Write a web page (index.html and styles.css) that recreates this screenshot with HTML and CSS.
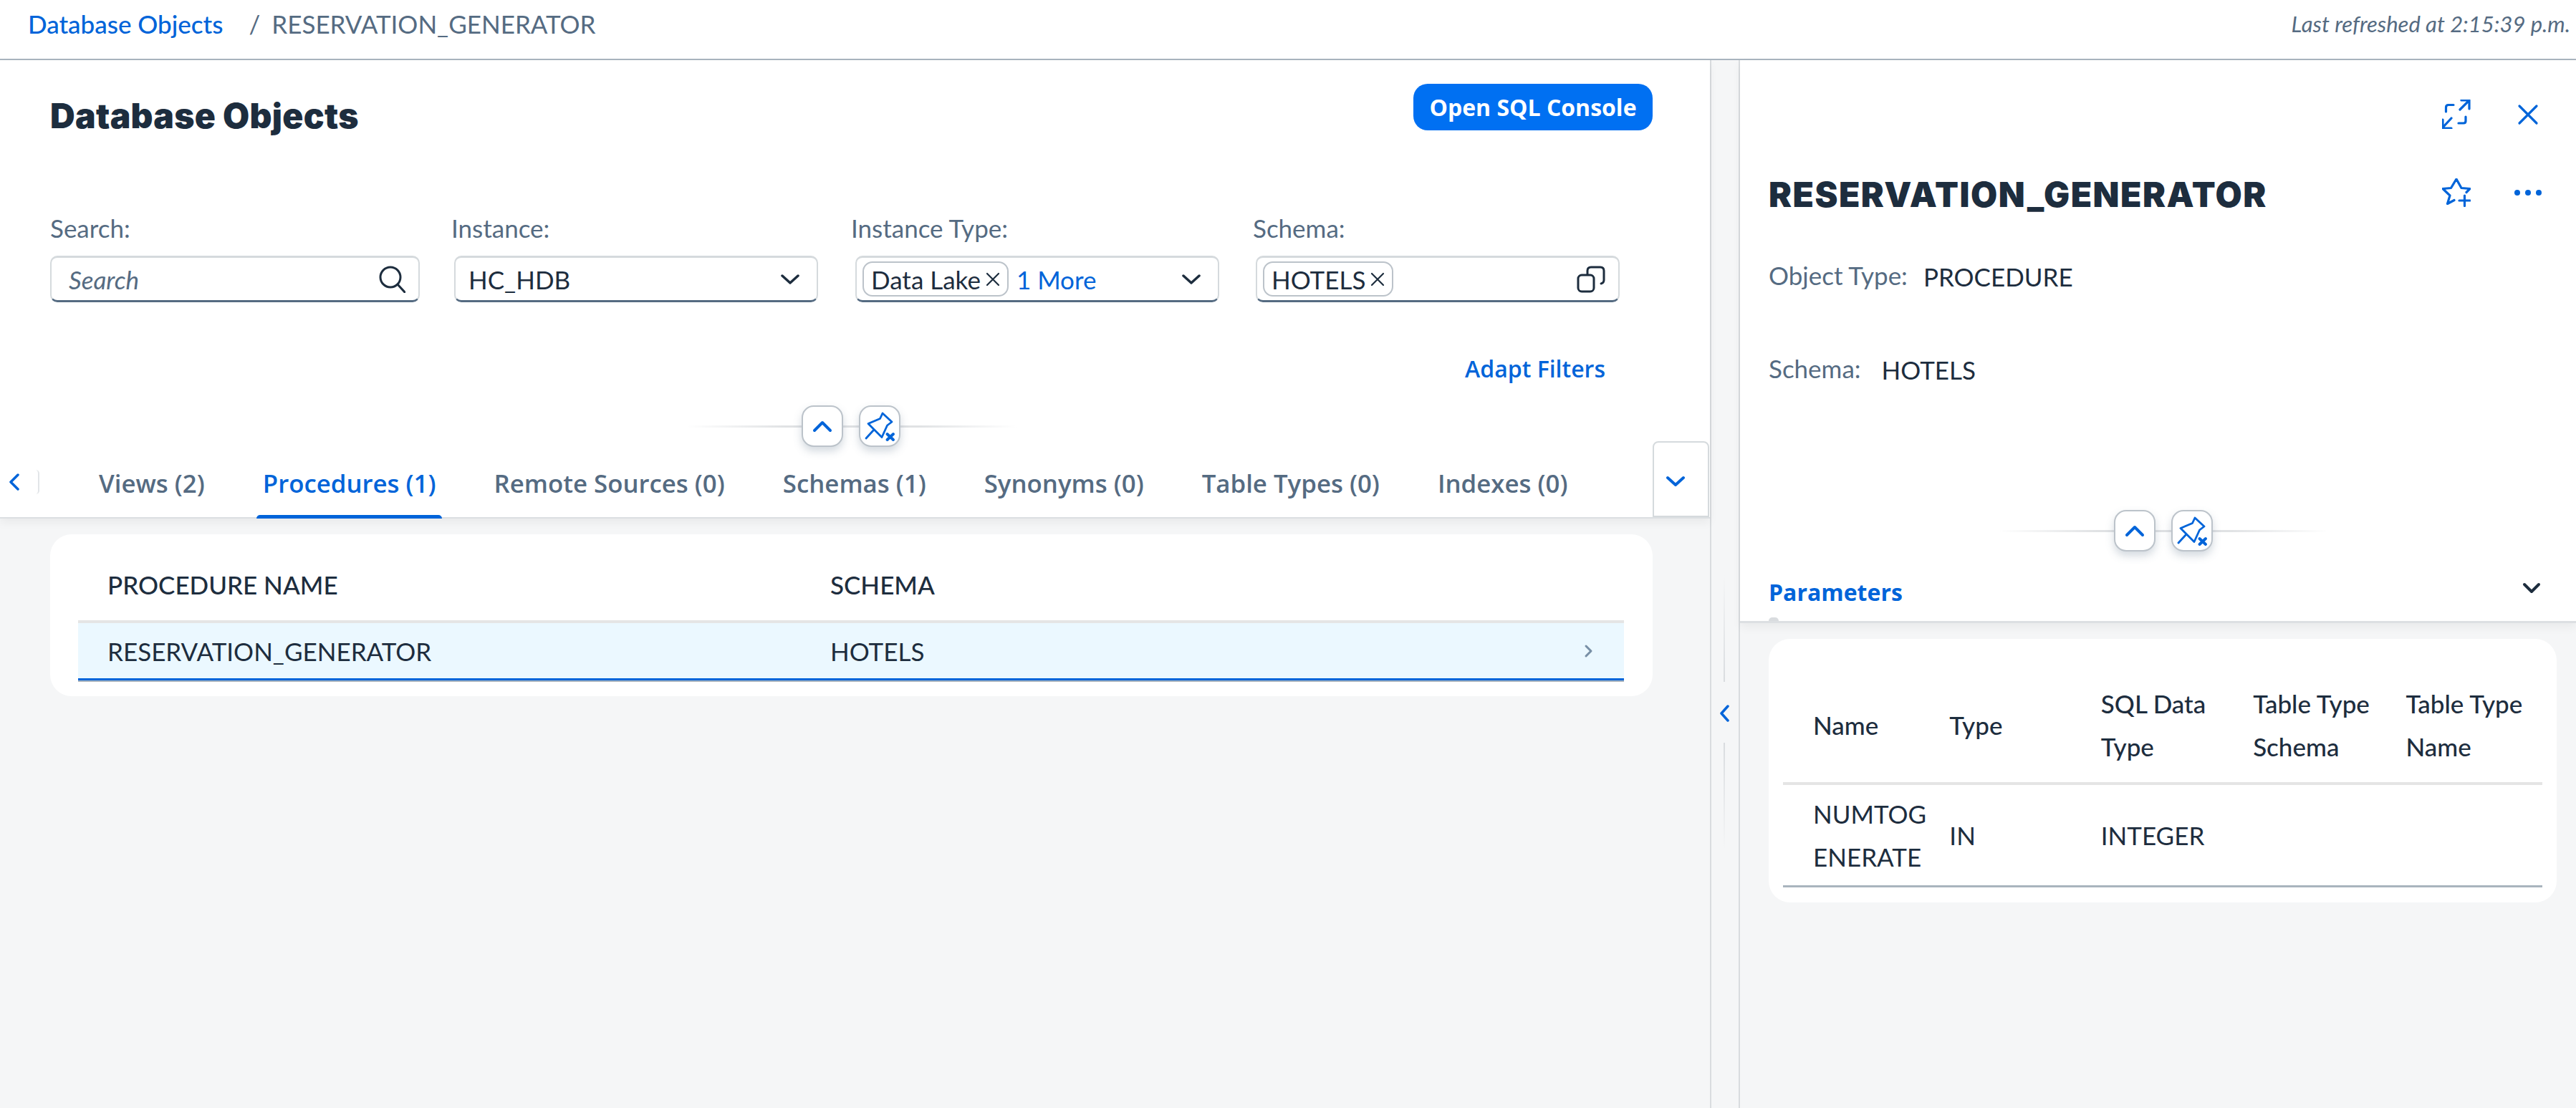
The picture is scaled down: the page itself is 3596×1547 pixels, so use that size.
FILE: index.html
```html
<!DOCTYPE html>
<html lang="en">
<head>
    <meta charset="UTF-8">
    <title>Database Objects</title>
    <link rel="stylesheet" href="styles.css">
</head>
<body>
    <header class="topbar">
        <div class="breadcrumb">
            <a class="crumb-link">Database Objects</a>
            <span class="crumb-sep">/</span>
            <span class="crumb-current">RESERVATION_GENERATOR</span>
        </div>
        <div class="refreshed">Last refreshed at 2:15:39 p.m.</div>
    </header>

    <div class="main">
        <section class="list-pane">
            <div class="list-head">
                <div class="title-row">
                    <h1 class="page-title">Database Objects</h1>
                    <button class="primary-btn">Open SQL Console</button>
                </div>

                <div class="filters">
                    <div class="filter">
                        <label class="filter-label">Search:</label>
                        <div class="field field-search">
                            <span class="placeholder">Search</span>
                            <svg class="icon-search" width="38" height="38" viewBox="0 0 38 38"><circle cx="17" cy="16" r="14"/><path d="M27 26l10 11"/></svg>
                        </div>
                    </div>
                    <div class="filter">
                        <label class="filter-label">Instance:</label>
                        <div class="field">
                            <span class="field-value">HC_HDB</span>
                            <svg class="icon-arrow" width="26" height="14" viewBox="0 0 26 14"><path d="M2 2l11 10L24 2"/></svg>
                        </div>
                    </div>
                    <div class="filter">
                        <label class="filter-label">Instance Type:</label>
                        <div class="field field-tokens">
                            <span class="token">Data Lake <svg class="token-x" width="20" height="20" viewBox="0 0 20 20"><path d="M2 2l16 16M18 2L2 18"/></svg></span>
                            <span class="more-link">1 More</span>
                            <svg class="icon-arrow" width="26" height="14" viewBox="0 0 26 14"><path d="M2 2l11 10L24 2"/></svg>
                        </div>
                    </div>
                    <div class="filter">
                        <label class="filter-label">Schema:</label>
                        <div class="field field-tokens">
                            <span class="token">HOTELS <svg class="token-x" width="20" height="20" viewBox="0 0 20 20"><path d="M2 2l16 16M18 2L2 18"/></svg></span>
                            <svg class="icon-help" width="40" height="38" viewBox="0 0 40 38"><rect x="2" y="13" width="22" height="23" rx="5"/><path d="M15 12V7q0-5 5-5h13q5 0 5 5v13q0 4-4 5"/></svg>
                        </div>
                    </div>
                </div>

                <div class="adapt-row"><a class="adapt-link">Adapt Filters</a></div>

                <div class="collapse-row">
                    <button class="round-btn"><svg width="58" height="58" viewBox="0 0 58 58"><path d="M18 35l11-11 11 11"/></svg></button>
                    <button class="round-btn pin-btn"><svg width="58" height="58" viewBox="0 0 58 58"><path d="M33 11l13 12-6.500 5L32 44.500 13 25.500l16.500-7zM20.500 34.500L10 46"/><path class="pin-x" d="M39.500 40l8.500 8M48 40l-8.500 8"/></svg></button>
                </div>

                <nav class="tabs">
                    <button class="tab-scroll"><svg width="16" height="24" viewBox="0 0 16 24"><path d="M13 2L3 12l10 10"/></svg></button>
                    <span class="tab-cut"></span>
                    <div class="tab-list">
                        <a class="tab">Views (2)</a>
                        <a class="tab tab-active">Procedures (1)</a>
                        <a class="tab">Remote Sources (0)</a>
                        <a class="tab">Schemas (1)</a>
                        <a class="tab">Synonyms (0)</a>
                        <a class="tab">Table Types (0)</a>
                        <a class="tab">Indexes (0)</a>
                    </div>
                    <button class="tab-more"><svg width="26" height="16" viewBox="0 0 26 16"><path d="M2 3l11 10L24 3"/></svg></button>
                </nav>
            </div>

            <div class="list-body">
                <div class="card list-card">
                    <table class="grid">
                        <colgroup><col class="col-name"><col class="col-schema"><col class="col-nav"></colgroup>
                        <thead>
                            <tr><th>PROCEDURE NAME</th><th>SCHEMA</th><th></th></tr>
                        </thead>
                        <tbody>
                            <tr class="row-selected">
                                <td>RESERVATION_GENERATOR</td>
                                <td>HOTELS</td>
                                <td class="nav-cell"><svg width="14" height="20" viewBox="0 0 14 20"><path d="M3 3l7 7-7 7"/></svg></td>
                            </tr>
                        </tbody>
                    </table>
                </div>
            </div>
        </section>

        <div class="splitter">
            <span class="split-line"></span>
            <svg class="split-arrow" width="14" height="24" viewBox="0 0 14 24"><path d="M12 2L3 12l9 10"/></svg>
            <span class="split-line split-line-low"></span>
        </div>

        <aside class="detail-pane">
            <div class="detail-head">
                <div class="detail-tools">
                    <svg class="tool" width="40" height="41" viewBox="0 0 40 41"><path d="M25 14L38 1M27 1h11v12M13 26L1 39M1 28v12h12M16 7.500h-7q-3.500 0-3.500 3.500v6M23 33h7q3 0 3-3v-6"/></svg>
                    <svg class="tool" width="40" height="41" viewBox="0 0 40 41"><path d="M8 9l24 24M32 9L8 33"/></svg>
                </div>
                <div class="detail-title-row">
                    <h2 class="detail-title">RESERVATION_GENERATOR</h2>
                    <div class="detail-actions">
                        <svg class="tool" width="40" height="40" viewBox="0 0 40 40"><path d="M34 19.500l5-5-12-1L20 1l-7.500 12.500L1 14.500 11 24 7.500 35.500l9.500-5M24 31h15M31.500 24v14.500"/></svg>
                        <svg class="tool-dots" width="40" height="40" viewBox="0 0 40 40"><circle cx="5" cy="20" r="4"/><circle cx="20" cy="20" r="4"/><circle cx="35" cy="20" r="4"/></svg>
                    </div>
                </div>
                <div class="attr"><span class="attr-label">Object Type:</span><span class="attr-value">PROCEDURE</span></div>
                <div class="attr"><span class="attr-label">Schema:</span><span class="attr-value">HOTELS</span></div>

                <div class="collapse-row collapse-row-detail">
                    <button class="round-btn"><svg width="58" height="58" viewBox="0 0 58 58"><path d="M18 35l11-11 11 11"/></svg></button>
                    <button class="round-btn pin-btn"><svg width="58" height="58" viewBox="0 0 58 58"><path d="M33 11l13 12-6.500 5L32 44.500 13 25.500l16.500-7zM20.500 34.500L10 46"/><path class="pin-x" d="M39.500 40l8.500 8M48 40l-8.500 8"/></svg></button>
                </div>

                <div class="section-tab">
                    <span class="section-name">Parameters</span>
                    <svg class="section-arrow" width="26" height="16" viewBox="0 0 26 16"><path d="M3 3l10 10L23 3"/></svg>
                </div>
            </div>

            <div class="detail-body">
                <div class="card param-card">
                    <table class="grid grid-params">
                        <colgroup><col class="p1"><col class="p2"><col class="p3"><col class="p4"><col class="p5"></colgroup>
                        <thead>
                            <tr><th>Name</th><th>Type</th><th>SQL Data Type</th><th>Table Type Schema</th><th>Table Type Name</th></tr>
                        </thead>
                        <tbody>
                            <tr><td class="wrap-cell">NUMTOG<wbr>ENERATE</td><td>IN</td><td>INTEGER</td><td></td><td></td></tr>
                        </tbody>
                    </table>
                </div>
            </div>
        </aside>
    </div>
</body>
</html>
```
FILE: styles.css
```css
* {
    box-sizing: border-box;
}
html, body {
    height: 100%;
}
body {
    margin: 0;
    overflow: hidden;
    display: flex;
    flex-direction: column;
    background-color: #f5f6f7;
    color: #1d2d3e;
    font-family: Lato, "Open Sans", sans-serif;
    font-size: 35px;
}
button {
    font-family: inherit;
    padding: 0;
    cursor: pointer;
}
svg {
    display: block;
    fill: none;
    stroke-linecap: round;
    stroke-linejoin: round;
}

/* top bar */
.topbar {
    height: 84px;
    flex: none;
    display: flex;
    align-items: center;
    justify-content: space-between;
    padding: 0 8px 16px 39px;
    background-color: white;
    border-bottom: 2px solid #a9b4be;
}
.breadcrumb {
    display: flex;
    align-items: center;
}
.crumb-link {
    color: #0064d9;
    font-weight: 500;
}
.crumb-sep {
    margin: 0 16px 0 36px;
    color: #556b82;
}
.crumb-current {
    color: #556b82;
}
.refreshed {
    color: #556b82;
    font-size: 31px;
    font-style: italic;
}

.main {
    flex: 1;
    display: flex;
    min-height: 0;
}

/* left pane */
.list-pane {
    width: 2389px;
    flex: none;
    border-right: 2px solid #d9dcdf;
    display: flex;
    flex-direction: column;
}
.list-head {
    background-color: white;
    height: 640px;
    flex: none;
    border-bottom: 2px solid #dcdfe2;
    box-shadow: 0 6px 12px rgba(0, 0, 0, 0.05);
    display: flex;
    flex-direction: column;
    position: relative;
}
.title-row {
    height: 98px;
    margin-top: 33px;
    padding: 0 80px 0 70px;
    display: flex;
    justify-content: space-between;
    align-items: flex-start;
}
.page-title, .detail-title {
    margin: 0;
    font-family: Inter, "Open Sans", sans-serif;
    font-size: 48px;
    font-weight: 900;
    line-height: 58px;
}
.page-title {
    padding-top: 16px;
    letter-spacing: 0.3px;
}
.primary-btn {
    width: 334px;
    height: 65px;
    background-color: #0070f2;
    color: white;
    border: none;
    border-radius: 20px;
    font-family: "Open Sans", sans-serif;
    font-size: 32px;
    font-weight: 700;
}
.filters {
    display: grid;
    grid-template-columns: 560px 558px 561px 560px;
    padding-left: 70px;
    margin-top: 79px;
}
.filter-label {
    display: block;
    height: 48px;
    line-height: 48px;
    color: #556b82;
}
.field {
    height: 65px;
    width: 508px;
    margin-top: 15px;
    margin-left: 4px;
    padding: 0 12px 0 18px;
    display: flex;
    align-items: center;
    justify-content: space-between;
    background-color: white;
    border: 2px solid #d5dadd;
    border-top-width: 3px;
    border-bottom: 3px solid #556b82;
    border-radius: 10px;
}
.filter:nth-child(3) .field {
    margin-left: 6px;
}
.field-search {
    width: 516px;
    margin-left: 0;
    padding-left: 24px;
    padding-right: 18px;
}
.placeholder {
    font-style: italic;
    color: #556b82;
}
.icon-search, .icon-arrow, .icon-help {
    stroke: #1d2d3e;
}
.icon-search {
    stroke-width: 3;
}
.icon-arrow {
    stroke-width: 3.5;
    margin-right: 12px;
}
.icon-help {
    stroke-width: 3;
    margin-right: 6px;
}
.field-tokens {
    padding-left: 8px;
    justify-content: flex-start;
}
.field-tokens svg.icon-arrow, .field-tokens svg.icon-help {
    margin-left: auto;
}
.token {
    height: 49px;
    display: flex;
    align-items: center;
    gap: 7px;
    padding: 0 10px 0 10px;
    border: 2px solid #bcc3ca;
    border-radius: 14px;
    white-space: nowrap;
}
.token-x {
    stroke: #1d2d3e;
    stroke-width: 2.2;
}
.more-link {
    margin-left: 11px;
    color: #0064d9;
}
.adapt-row {
    height: 40px;
    margin-top: 72px;
    padding-right: 146px;
    display: flex;
    align-items: center;
    justify-content: flex-end;
}
.adapt-link {
    color: #0064d9;
    font-family: "Open Sans", sans-serif;
    font-size: 32px;
    font-weight: 600;
}
.collapse-row {
    height: 58px;
    margin-top: 32px;
    padding-right: 11px;
    display: flex;
    justify-content: center;
    gap: 22px;
    background: linear-gradient(to right, transparent, #e0e2e4 30%, #e0e2e4 70%, transparent) no-repeat calc(50% - 5px) center / 460px 3px;
}
.round-btn {
    width: 58px;
    height: 58px;
    background-color: white;
    border: 2px solid #bcc3ca;
    border-radius: 17px;
    box-shadow: 0 6px 12px rgba(85, 107, 130, 0.25);
}
.round-btn svg {
    margin: -2px;
    stroke: #0064d9;
    stroke-width: 4;
}
.pin-btn svg {
    stroke-width: 2.8;
}
.pin-btn .pin-x {
    stroke-width: 4;
}

/* tabs */
.tabs {
    height: 98px;
    flex: none;
    display: flex;
    align-items: flex-end;
    position: relative;
}
.tab-scroll {
    width: 50px;
    height: 98px;
    padding-left: 12px;
    border: none;
    background: none;
    align-self: center;
}
.tab-scroll svg {
    stroke: #0064d9;
    stroke-width: 3.5;
}
.tab-cut {
    width: 5px;
    height: 34px;
    align-self: center;
    border-right: 2px solid #e2e5e8;
    border-radius: 0 14px 14px 0;
}
.tab-list {
    flex: 1;
    display: flex;
    gap: 63px;
    padding-left: 74px;
}
.tab {
    height: 98px;
    padding: 27px 9px 0;
    color: #556b82;
    font-family: "Open Sans", sans-serif;
    font-size: 34.800px;
    font-weight: 600;
    white-space: nowrap;
    position: relative;
}
.tab-active {
    color: #0064d9;
}
.tab-active::after {
    content: "";
    position: absolute;
    left: 0;
    right: 0;
    bottom: -2px;
    height: 5px;
    background-color: #0064d9;
    border-radius: 5px 5px 0 0;
}
.tab-more {
    width: 79px;
    height: 106px;
    flex: none;
    margin-right: 1px;
    background-color: white;
    border: 2px solid #d5dadd;
    border-radius: 8px 8px 0 0;
    padding: 6px 0 0 17px;
    align-self: flex-end;
}
.tab-more svg {
    stroke: #0064d9;
    stroke-width: 4;
}

/* cards and tables */
.list-body {
    padding: 22px 80px 0 70px;
}
.card {
    background-color: white;
    border-radius: 30px;
}
.list-card {
    height: 226px;
    padding: 0 40px 0 39px;
}
.grid {
    width: 100%;
    border-collapse: collapse;
    table-layout: fixed;
}
.grid th {
    text-align: left;
    font-weight: 500;
    padding: 0 0 0 41px;
}
.grid td {
    padding: 0 0 0 41px;
}
.list-card .grid th {
    height: 122px;
    padding-top: 20px;
    border-bottom: 4px solid #e5e5e5;
}
.list-card .grid td {
    height: 84px;
    padding-bottom: 4px;
}
.col-name {
    width: 1009px;
}
.col-nav {
    width: 100px;
}
.row-selected td {
    background: linear-gradient(to top, #a9b4be 2px, #0064d9 2px, #0064d9 5px, #ebf8ff 5px);
}
.nav-cell svg {
    margin-left: 3px;
    stroke: #788fa6;
    stroke-width: 3;
}

/* splitter */
.splitter {
    width: 40px;
    flex: none;
    border-right: 2px solid #d9dcdf;
    display: flex;
    flex-direction: column;
    align-items: center;
    padding-top: 718px;
    padding-right: 2px;
}
.split-line {
    width: 2px;
    height: 150px;
    flex: none;
    background: linear-gradient(to top, #d9dcdf, transparent);
}
.split-line-low {
    margin-top: 29px;
    background: linear-gradient(to bottom, #d9dcdf, transparent);
}
.split-arrow {
    flex: none;
    margin-top: 32px;
    stroke: #0064d9;
    stroke-width: 3.5;
}

/* right pane */
.detail-pane {
    flex: 1;
    min-width: 0;
    display: flex;
    flex-direction: column;
}
.detail-head {
    height: 786px;
    flex: none;
    background-color: white;
    border-bottom: 3px solid #dcdfe2;
    box-shadow: 0 6px 12px rgba(0, 0, 0, 0.05);
    display: flex;
    flex-direction: column;
    padding: 0 27px 0 40px;
}
.detail-tools {
    display: flex;
    justify-content: flex-end;
    gap: 60px;
    margin-top: 55px;
    margin-right: 20px;
}
.tool {
    stroke: #0064d9;
    stroke-width: 3.2;
}
.tool-dots {
    fill: #0064d9;
}
.detail-title-row {
    height: 60px;
    margin-top: 59px;
    margin-right: 20px;
    display: flex;
    justify-content: space-between;
    align-items: center;
}
.detail-title {
    padding-top: 6px;
    letter-spacing: 1.5px;
}
.detail-actions {
    display: flex;
    gap: 60px;
}
.attr {
    height: 60px;
    margin-top: 55px;
    display: flex;
    align-items: center;
}
.attr + .attr {
    margin-top: 70px;
}
.attr-label {
    color: #556b82;
    margin-right: 22px;
}
.attr + .attr .attr-label {
    margin-right: 29px;
}
.attr-value {
    padding-top: 4px;
}
.collapse-row-detail {
    margin-top: 168px;
    padding: 0 0 0 14px;
    margin-left: -40px;
    margin-right: -27px;
    background-position: calc(50% + 7px) center;
}
.section-tab {
    flex: 1;
    display: flex;
    justify-content: space-between;
    position: relative;
    padding-top: 35px;
}
.section-name {
    color: #0064d9;
    font-family: "Open Sans", sans-serif;
    font-size: 32px;
    font-weight: 700;
}
.section-arrow {
    margin: 8px 22px 0 0;
    stroke: #1d2d3e;
    stroke-width: 4;
}
.section-tab::after {
    content: "";
    position: absolute;
    left: 0;
    bottom: 0;
    width: 14px;
    height: 5px;
    border-radius: 5px 5px 0 0;
    background-color: #d9dcdf;
}
.detail-body {
    padding: 22px 27px 0 40px;
}
.param-card {
    height: 368px;
    padding: 0 20px;
}
.grid-params th, .grid-params td {
    line-height: 60px;
    padding: 0 10px 0 40px;
}
.grid-params th {
    height: 202px;
    padding-top: 40px;
    border-bottom: 4px solid #e5e5e5;
}
.grid-params td {
    height: 143px;
    border-bottom: 3px solid #a9b4be;
}
.wrap-cell {
    white-space: nowrap;
}
.grid-params th:first-child, .grid-params td:first-child {
    padding-left: 42px;
}
.p1 { width: 192px; }
.p2 { width: 211px; }
.p3 { width: 212px; }
.p4 { width: 213px; }
.p5 { width: 230px; }
```
